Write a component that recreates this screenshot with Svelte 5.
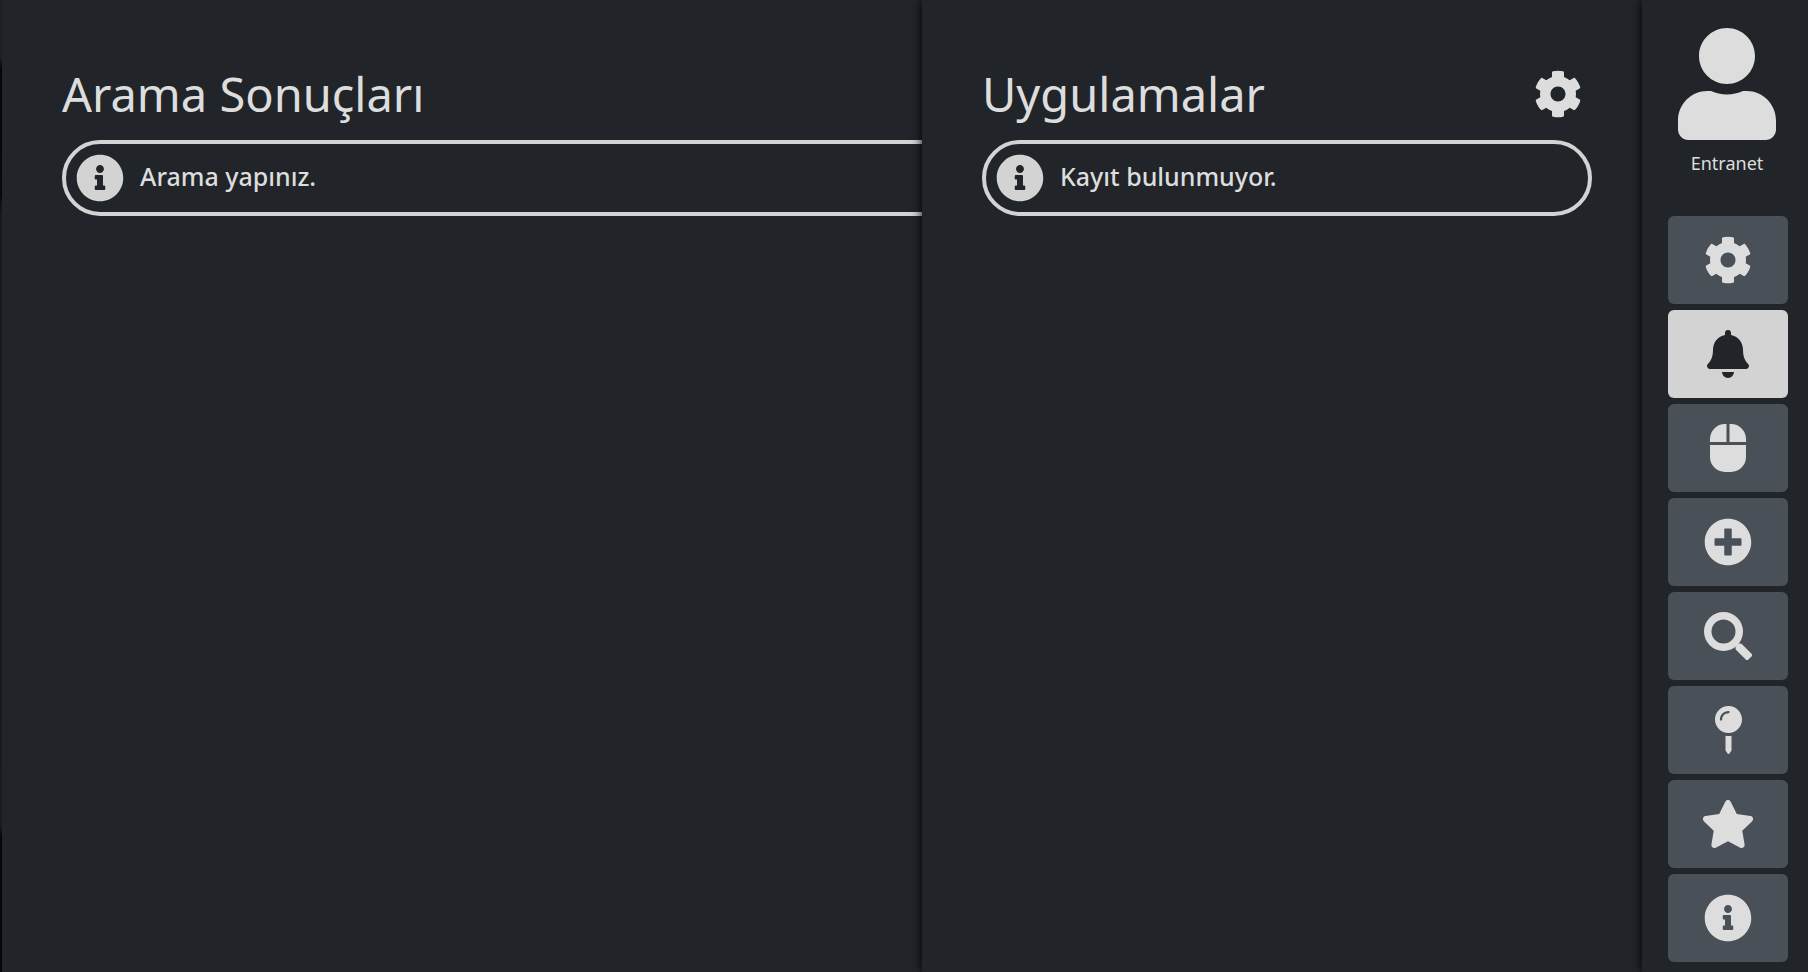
<script>
  const icons = {
    cog: {
      box: '0 0 512 512',
      d: 'M487.4 315.7l-42.6-24.6c4.3-23.2 4.3-47 0-70.2l42.6-24.6c4.9-2.8 7.1-8.6 5.5-14-11.1-35.6-30-67.8-54.7-94.6-3.8-4.1-10-5.1-14.8-2.3L380.8 110c-17.9-15.4-38.5-27.3-60.8-35.1V25.8c0-5.6-3.9-10.5-9.4-11.7-36.7-8.2-74.3-7.8-109.2 0-5.5 1.2-9.4 6.1-9.4 11.7V75c-22.2 7.9-42.8 19.8-60.8 35.1L88.7 85.5c-4.9-2.8-11-1.9-14.8 2.3-24.7 26.7-43.6 58.9-54.7 94.6-1.7 5.4.6 11.2 5.5 14L67.3 221c-4.3 23.2-4.3 47 0 70.2l-42.6 24.6c-4.9 2.8-7.1 8.6-5.5 14 11.1 35.6 30 67.8 54.7 94.6 3.8 4.1 10 5.1 14.8 2.3l42.6-24.6c17.9 15.4 38.5 27.3 60.8 35.1v49.2c0 5.6 3.9 10.5 9.4 11.7 36.7 8.2 74.3 7.8 109.2 0 5.5-1.2 9.4-6.1 9.4-11.7v-49.2c22.2-7.9 42.8-19.8 60.8-35.1l42.6 24.6c4.9 2.8 11 1.9 14.8-2.3 24.7-26.7 43.6-58.9 54.7-94.6 1.5-5.5-.7-11.3-5.6-14.1zM256 336c-44.1 0-80-35.9-80-80s35.9-80 80-80 80 35.9 80 80-35.9 80-80 80z'
    },
    bell: {
      box: '0 0 448 512',
      d: 'M448 384c0 16-12.8 32-32.1 32H32.1C12.8 416 .1 400 0 384a31.3 31.3 0 0 1 8.6-21.7C27.9 341.5 64.1 310.3 64.1 208c0-77.7 54.5-139.9 127.9-155.2V32a32 32 0 1 1 64 0v20.8C329.4 68.1 383.9 130.3 383.9 208c0 102.3 36.2 133.5 55.5 154.3A31.3 31.3 0 0 1 448 384zM160 448h128a64 64 0 0 1-128 0z'
    },
    mouse: {
      box: '0 0 384 512',
      d: 'M0 192v-32A160 160 0 0 1 160 0h16v192zM208 0h16a160 160 0 0 1 160 160v32H208zM0 224h384v128a160 160 0 0 1-160 160h-64A160 160 0 0 1 0 352z'
    },
    plus: {
      box: '0 0 512 512',
      d: 'M256 8C119 8 8 119 8 256s111 248 248 248 248-111 248-248S393 8 256 8zm144 276c0 6.6-5.4 12-12 12h-92v92c0 6.6-5.4 12-12 12h-56c-6.6 0-12-5.4-12-12v-92h-92c-6.6 0-12-5.4-12-12v-56c0-6.6 5.4-12 12-12h92v-92c0-6.6 5.4-12 12-12h56c6.6 0 12 5.4 12 12v92h92c6.6 0 12 5.4 12 12v56z'
    },
    search: {
      box: '0 0 512 512',
      d: 'M208 0a208 208 0 1 0 0 416 208 208 0 0 0 0-416zm0 80a128 128 0 1 1 0 256 128 128 0 0 1 0-256zM336 372l36-36h16q10 0 17 7l99.6 99.7a24 24 0 0 1 0 34l-28.3 28.3a24 24 0 0 1-34 0L343 405q-7-7-7-17z'
    },
    pin: {
      box: '0 0 288 512',
      d: 'M112 317v156.600l22 33c4.800 7.100 15.200 7.100 20 0l22-33V317c-10.400 1.900-21.100 3-32 3s-21.600-1.100-32-3zM144 0C64.500 0 0 64.500 0 144s64.500 144 144 144 144-64.500 144-144S223.500 0 144 0zm0 76c-37.500 0-68 30.500-68 68 0 6.600-5.400 12-12 12s-12-5.400-12-12c0-50.700 41.300-92 92-92 6.600 0 12 5.400 12 12s-5.400 12-12 12z'
    },
    star: {
      box: '0 0 576 512',
      d: 'M259.3 17.8L194 150.2 47.9 171.5c-26.2 3.8-36.7 36.1-17.7 54.6l105.7 103-25 145.5c-4.5 26.3 23.2 46 46.4 33.7L288 439.6l130.7 68.7c23.2 12.2 50.9-7.4 46.4-33.7l-25-145.5 105.7-103c19-18.5 8.5-50.8-17.7-54.6L382 150.2 316.7 17.8c-11.7-23.6-45.6-23.9-57.4 0z'
    },
    info: {
      box: '0 0 512 512',
      d: 'M256 8C119 8 8 119.1 8 256c0 137 111 248 248 248s248-111 248-248C504 119.1 393 8 256 8zm0 110c23.200 0 42 18.800 42 42s-18.800 42-42 42-42-18.800-42-42 18.800-42 42-42zm56 254c0 6.600-5.400 12-12 12h-88c-6.600 0-12-5.400-12-12v-24c0-6.600 5.400-12 12-12h12v-64h-12c-6.600 0-12-5.400-12-12v-24c0-6.600 5.400-12 12-12h64c6.600 0 12 5.400 12 12v100h12c6.600 0 12 5.400 12 12v24z'
    },
    user: {
      box: '0 0 448 512',
      d: 'M224 256c70.700 0 128-57.300 128-128S294.700 0 224 0 96 57.300 96 128s57.300 128 128 128zm89.600 32h-16.700c-22.200 10.200-46.900 16-72.900 16s-50.600-5.800-72.900-16h-16.700C60.200 288 0 348.200 0 422.400V464c0 26.500 21.500 48 48 48h352c26.500 0 48-21.500 48-48v-41.600c0-74.200-60.200-134.400-134.400-134.400z'
    }
  };

  const tools = [
    { icon: 'cog', label: 'Ayarlar' },
    { icon: 'bell', label: 'Bildirimler' },
    { icon: 'mouse', label: 'Fare' },
    { icon: 'plus', label: 'Ekle' },
    { icon: 'search', label: 'Ara' },
    { icon: 'pin', label: 'Sabitle' },
    { icon: 'star', label: 'Favoriler' },
    { icon: 'info', label: 'Bilgi' }
  ];

  let active = $state('bell');
</script>

{#snippet glyph(name)}
  <svg class="icon" viewBox={icons[name].box} aria-hidden="true"><path d={icons[name].d} /></svg>
{/snippet}

<div class="shell">
  <main class="panel results">
    <header class="head"><h1>Arama Sonuçları</h1></header>
    <div class="notice bleed" role="status">
      {@render glyph('info')}
      <p>Arama yapınız.</p>
    </div>
  </main>

  <section class="panel apps">
    <header class="head">
      <h1>Uygulamalar</h1>
      <button class="plain" aria-label="Uygulama ayarları">{@render glyph('cog')}</button>
    </header>
    <div class="notice" role="status">
      {@render glyph('info')}
      <p>Kayıt bulunmuyor.</p>
    </div>
  </section>

  <aside class="side">
    <a class="profile" href="#profil">
      <span class="avatar">{@render glyph('user')}</span>
      <span>Entranet</span>
    </a>
    <nav class="tools">
      {#each tools as tool}
        <button
          class="tool"
          class:active={active === tool.icon}
          aria-label={tool.label}
          aria-pressed={active === tool.icon}
          onclick={() => (active = tool.icon)}
        >
          {@render glyph(tool.icon)}
        </button>
      {/each}
    </nav>
  </aside>
</div>

<style>
  :global(body) {
    margin: 0;
    background: #212529;
  }

  .shell {
    display: flex;
    box-sizing: border-box;
    min-height: 100vh;
    padding-left: 2px;
    background: linear-gradient(#1d1f20 6%, #050606 7%, #070807 20%, #171918 22%, #1a1b1c 85%, #050608 86%);
    overflow: hidden;
    color: #ddd;
    font-family: 'Noto Sans', 'Open Sans', sans-serif;
  }

  .panel,
  .side {
    box-sizing: border-box;
    background: #212529;
  }

  .panel {
    padding: 60px 50px 0 60px;
  }

  .results {
    flex: 1;
    min-width: 0;
    overflow: hidden;
  }

  .apps {
    flex: 0 0 720px;
    position: relative;
    box-shadow: 0 0 10px #000;
  }

  .head {
    display: flex;
    align-items: center;
    justify-content: space-between;
    height: 68px;
    margin-bottom: 12px;
    padding-right: 10px;
  }

  h1 {
    margin: 0;
    font-size: 47px;
    font-weight: 400;
    line-height: 68px;
    white-space: nowrap;
  }

  .icon {
    display: block;
    height: 48px;
    fill: currentColor;
  }

  .plain {
    padding: 0;
    border: 0;
    background: none;
    color: inherit;
    cursor: pointer;
  }

  .notice {
    display: flex;
    align-items: center;
    gap: 16px;
    padding: 10px;
    border: 4px solid lightgray;
    border-radius: 38px;
  }

  .notice .icon {
    color: lightgray;
  }

  .bleed {
    margin-right: -100px;
  }

  p {
    margin: 0;
    padding-bottom: 4px;
    font-size: 25px;
    font-weight: 500;
    line-height: 36px;
    white-space: nowrap;
  }

  .side {
    flex: 0 0 166px;
    position: relative;
    padding: 28px 20px 10px 26px;
    box-shadow: 0 0 10px #000;
  }

  .profile {
    display: flex;
    flex-direction: column;
    align-items: center;
    gap: 10px;
    height: 188px;
    padding-right: 2px;
    color: inherit;
    font-size: 18px;
    line-height: 26px;
    text-decoration: none;
  }

  .avatar .icon {
    height: 112px;
  }

  .tools {
    display: flex;
    flex-direction: column;
    gap: 6px;
  }

  .tool {
    display: flex;
    align-items: center;
    justify-content: center;
    height: 88px;
    padding: 0;
    border: 0;
    border-radius: 6px;
    background: #495057;
    color: #ddd;
    cursor: pointer;
  }

  .tool.active {
    background: lightgray;
    color: #212529;
  }
</style>
